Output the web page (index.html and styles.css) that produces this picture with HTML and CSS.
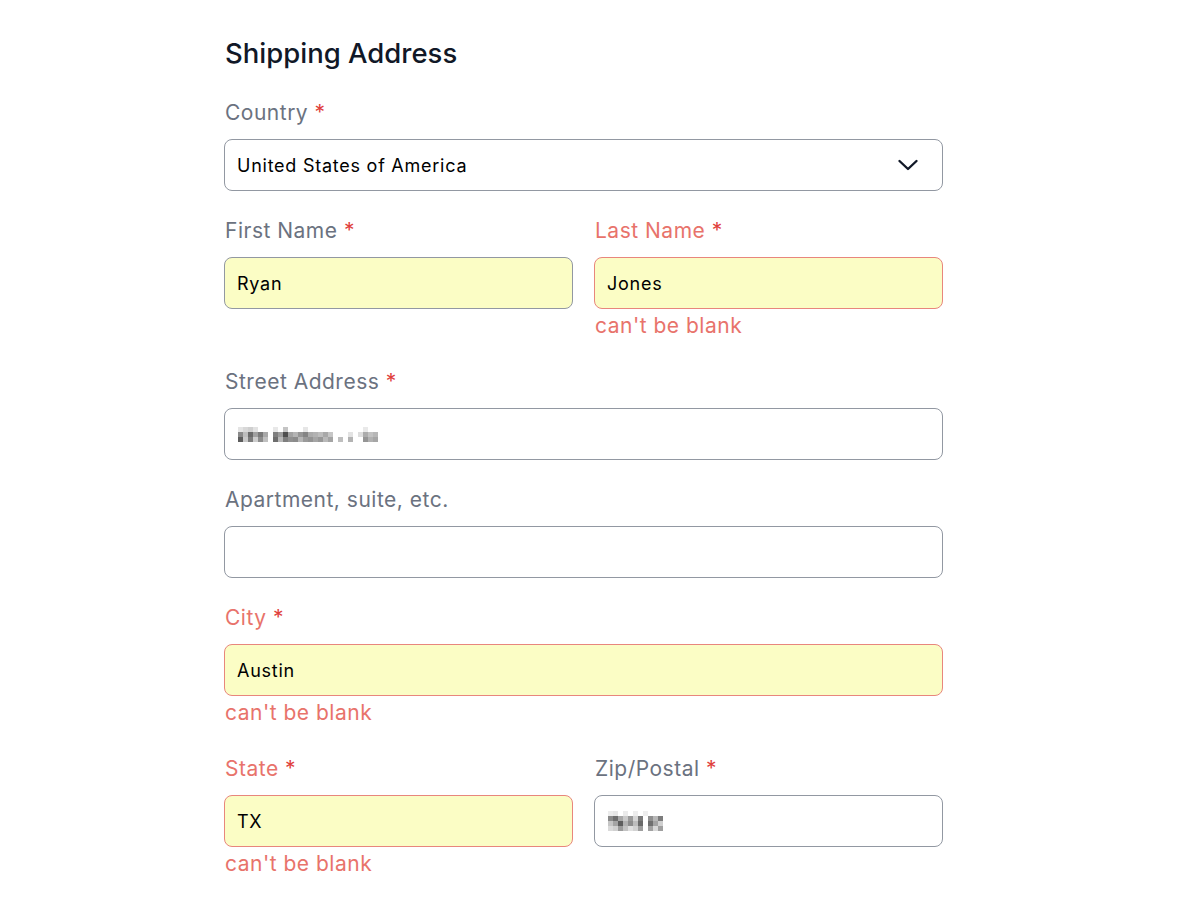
FILE: index.html
```html
<!DOCTYPE html>
<html lang="en">
<head>
<meta charset="utf-8">
<title>Shipping Address</title>
<link rel="stylesheet" href="styles.css">
</head>
<body>
<main class="form">
  <h2 class="title">Shipping Address</h2>

  <div class="field">
    <label class="label">Country <span class="req">*</span></label>
    <div class="input select">
      <span>United States of America</span>
      <svg class="chevron" width="22" height="14" viewBox="0 0 22 14"><path d="M2.5 3 L11 11 L19.5 3" fill="none" stroke="#111827" stroke-width="2.4" stroke-linecap="round" stroke-linejoin="round"/></svg>
    </div>
  </div>

  <div class="row">
    <div class="field">
      <label class="label">First Name <span class="req">*</span></label>
      <div class="input filled">Ryan</div>
    </div>
    <div class="field has-error">
      <label class="label">Last Name <span class="req">*</span></label>
      <div class="input filled">Jones</div>
      <div class="error">can't be blank</div>
    </div>
  </div>

  <div class="field after-error">
    <label class="label">Street Address <span class="req">*</span></label>
    <div class="input">
      <svg class="mosaic" width="145" height="15" viewBox="0 0 145 15">
        <rect x="0" y="0" width="5" height="5" fill="#e4e4e4"/>
        <rect x="5" y="0" width="5" height="5" fill="#d8d8d8"/>
        <rect x="10" y="0" width="5" height="5" fill="#cfcfcf"/>
        <rect x="15" y="0" width="5" height="5" fill="#e2e2e2"/>
        <rect x="0" y="5" width="5" height="5" fill="#8a8a8a"/>
        <rect x="5" y="5" width="5" height="5" fill="#bdbdbd"/>
        <rect x="10" y="5" width="5" height="5" fill="#6a6a6a"/>
        <rect x="15" y="5" width="5" height="5" fill="#a0a0a0"/>
        <rect x="20" y="5" width="5" height="5" fill="#7a7a7a"/>
        <rect x="25" y="5" width="5" height="5" fill="#a9a9a9"/>
        <rect x="0" y="10" width="5" height="5" fill="#5c5c5c"/>
        <rect x="5" y="10" width="5" height="5" fill="#c8c8c8"/>
        <rect x="10" y="10" width="5" height="5" fill="#7c7c7c"/>
        <rect x="15" y="10" width="5" height="5" fill="#cccccc"/>
        <rect x="20" y="10" width="5" height="5" fill="#8d8d8d"/>
        <rect x="25" y="10" width="5" height="5" fill="#c0c0c0"/>
        <rect x="35" y="0" width="5" height="5" fill="#e8e8e8"/>
        <rect x="35" y="5" width="5" height="5" fill="#7f7f7f"/>
        <rect x="35" y="10" width="5" height="5" fill="#6d6d6d"/>
        <rect x="40" y="5" width="5" height="5" fill="#9c9c9c"/>
        <rect x="40" y="10" width="5" height="5" fill="#b8b8b8"/>
        <rect x="45" y="0" width="5" height="5" fill="#c4c4c4"/>
        <rect x="45" y="5" width="5" height="5" fill="#4e4e4e"/>
        <rect x="45" y="10" width="5" height="5" fill="#7e7e7e"/>
        <rect x="50" y="5" width="5" height="5" fill="#a2a2a2"/>
        <rect x="50" y="10" width="5" height="5" fill="#909090"/>
        <rect x="55" y="5" width="5" height="5" fill="#b4b4b4"/>
        <rect x="55" y="10" width="5" height="5" fill="#8b8b8b"/>
        <rect x="60" y="5" width="5" height="5" fill="#969696"/>
        <rect x="60" y="10" width="5" height="5" fill="#b6b6b6"/>
        <rect x="65" y="0" width="5" height="5" fill="#e6e6e6"/>
        <rect x="65" y="5" width="5" height="5" fill="#848484"/>
        <rect x="65" y="10" width="5" height="5" fill="#9a9a9a"/>
        <rect x="70" y="5" width="5" height="5" fill="#ababab"/>
        <rect x="70" y="10" width="5" height="5" fill="#939393"/>
        <rect x="75" y="5" width="5" height="5" fill="#b2b2b2"/>
        <rect x="75" y="10" width="5" height="5" fill="#a5a5a5"/>
        <rect x="80" y="5" width="5" height="5" fill="#bdbdbd"/>
        <rect x="80" y="10" width="5" height="5" fill="#989898"/>
        <rect x="85" y="5" width="5" height="5" fill="#a9a9a9"/>
        <rect x="85" y="10" width="5" height="5" fill="#b9b9b9"/>
        <rect x="90" y="5" width="5" height="5" fill="#c6c6c6"/>
        <rect x="90" y="10" width="5" height="5" fill="#a4a4a4"/>
        <rect x="100" y="10" width="5" height="5" fill="#bfbfbf"/>
        <rect x="110" y="5" width="5" height="5" fill="#e3e3e3"/>
        <rect x="110" y="10" width="5" height="5" fill="#b3b3b3"/>
        <rect x="120" y="5" width="5" height="5" fill="#dedede"/>
        <rect x="125" y="0" width="5" height="5" fill="#e9e9e9"/>
        <rect x="125" y="5" width="5" height="5" fill="#acacac"/>
        <rect x="125" y="10" width="5" height="5" fill="#959595"/>
        <rect x="130" y="5" width="5" height="5" fill="#c2c2c2"/>
        <rect x="130" y="10" width="5" height="5" fill="#b1b1b1"/>
        <rect x="135" y="5" width="5" height="5" fill="#b7b7b7"/>
        <rect x="135" y="10" width="5" height="5" fill="#a6a6a6"/>
      </svg>
    </div>
  </div>

  <div class="field">
    <label class="label">Apartment, suite, etc.</label>
    <div class="input"></div>
  </div>

  <div class="field has-error">
    <label class="label">City <span class="req">*</span></label>
    <div class="input filled">Austin</div>
    <div class="error">can't be blank</div>
  </div>

  <div class="row after-error">
    <div class="field has-error">
      <label class="label">State <span class="req">*</span></label>
      <div class="input filled">TX</div>
      <div class="error">can't be blank</div>
    </div>
    <div class="field">
      <label class="label">Zip/Postal <span class="req">*</span></label>
      <div class="input">
        <svg class="mosaic" width="56" height="20" viewBox="0 0 56 20">
          <rect x="0" y="0" width="5" height="5" fill="#ececec"/>
          <rect x="5" y="0" width="5" height="5" fill="#e6e6e6"/>
          <rect x="15" y="0" width="5" height="5" fill="#ebebeb"/>
          <rect x="25" y="0" width="5" height="5" fill="#ededed"/>
          <rect x="35" y="0" width="5" height="5" fill="#eeeeee"/>
          <rect x="0" y="5" width="5" height="5" fill="#8a8a8a"/>
          <rect x="5" y="5" width="5" height="5" fill="#6e6e6e"/>
          <rect x="10" y="5" width="5" height="5" fill="#a8a8a8"/>
          <rect x="15" y="5" width="5" height="5" fill="#c9c9c9"/>
          <rect x="20" y="5" width="5" height="5" fill="#9a9a9a"/>
          <rect x="25" y="5" width="5" height="5" fill="#d5d5d5"/>
          <rect x="30" y="5" width="5" height="5" fill="#7b7b7b"/>
          <rect x="40" y="5" width="5" height="5" fill="#8f8f8f"/>
          <rect x="45" y="5" width="5" height="5" fill="#b7b7b7"/>
          <rect x="50" y="5" width="5" height="5" fill="#7c7c7c"/>
          <rect x="0" y="10" width="5" height="5" fill="#c5c5c5"/>
          <rect x="5" y="10" width="5" height="5" fill="#a4a4a4"/>
          <rect x="10" y="10" width="5" height="5" fill="#5e5e5e"/>
          <rect x="15" y="10" width="5" height="5" fill="#b2b2b2"/>
          <rect x="20" y="10" width="5" height="5" fill="#8d8d8d"/>
          <rect x="25" y="10" width="5" height="5" fill="#bdbdbd"/>
          <rect x="30" y="10" width="5" height="5" fill="#6a6a6a"/>
          <rect x="40" y="10" width="5" height="5" fill="#6f6f6f"/>
          <rect x="45" y="10" width="5" height="5" fill="#a3a3a3"/>
          <rect x="50" y="10" width="5" height="5" fill="#cfcfcf"/>
          <rect x="0" y="15" width="5" height="5" fill="#dadada"/>
          <rect x="5" y="15" width="5" height="5" fill="#d0d0d0"/>
          <rect x="10" y="15" width="5" height="5" fill="#9b9b9b"/>
          <rect x="15" y="15" width="5" height="5" fill="#c3c3c3"/>
          <rect x="20" y="15" width="5" height="5" fill="#e0e0e0"/>
          <rect x="25" y="15" width="5" height="5" fill="#d2d2d2"/>
          <rect x="30" y="15" width="5" height="5" fill="#9e9e9e"/>
          <rect x="40" y="15" width="5" height="5" fill="#a1a1a1"/>
          <rect x="45" y="15" width="5" height="5" fill="#d8d8d8"/>
          <rect x="50" y="15" width="5" height="5" fill="#9f9f9f"/>
        </svg>
      </div>
    </div>
  </div>
</main>
</body>
</html>
```

FILE: styles.css
```css
* { box-sizing: border-box; }

html, body {
  margin: 0;
  padding: 0;
  background: #ffffff;
}

body {
  font-family: Inter, "Noto Sans", "Liberation Sans", sans-serif;
  color: #111827;
}

.form {
  width: 719px;
  margin-left: 224px;
  padding-top: 35px;
}

.title {
  margin: 0 0 28px 1px;
  font-size: 27.5px;
  line-height: 36px;
  font-weight: 500;
  color: #111827;
}

.field {
  display: flex;
  flex-direction: column;
  margin-top: 26px;
}

.title + .field { margin-top: 0; }

.row {
  display: grid;
  grid-template-columns: 1fr 1fr;
  column-gap: 21px;
  margin-top: 26px;
  align-items: start;
}

.row > .field { margin-top: 0; }

.field.after-error,
.row.after-error { margin-top: 28px; }

.label {
  font-size: 21px;
  line-height: 28px;
  letter-spacing: 0.5px;
  color: #6b7280;
  margin: 0 0 12px 1px;
}

.req { color: #e0403c; }

.has-error .label { color: #e8736b; }
.has-error .label .req { color: #e0403c; }

.input {
  height: 52px;
  border: 1px solid #9298a2;
  border-radius: 8px;
  background: #ffffff;
  padding: 0 12px;
  display: flex;
  align-items: center;
  font-size: 18px;
  letter-spacing: 0.75px;
  color: #000000;
}

.input.filled { background: #fbfdc5; }

.has-error .input { border-color: #e8867d; }

.select { justify-content: space-between; padding-right: 23px; }

.chevron { display: block; }

.mosaic { display: block; margin-left: 1px; }

.error {
  margin-top: 3px;
  font-size: 21px;
  line-height: 28px;
  letter-spacing: 0.5px;
  color: #e8736b;
  padding-left: 1px;
}
```
